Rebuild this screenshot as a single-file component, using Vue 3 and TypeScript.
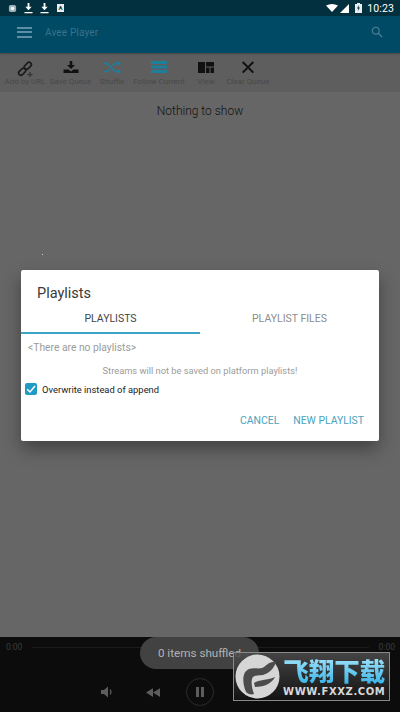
<template>
  <div class="screen">
    <header class="status-bar">
      <div class="status-left">
        <svg class="st-icon" viewBox="0 0 10 10" width="9" height="9"><rect x="1" y="1" width="8" height="8" rx="2" fill="#9fb2ba" /><circle cx="5" cy="5" r="2" fill="#eef3f5" /></svg>
        <svg class="st-icon" viewBox="0 0 10 12" width="9" height="11"><path d="M4 0h2v4h2.500L5 8 1.500 4H4zM.5 10h9v1.200h-9z" fill="#fff" /></svg>
        <svg class="st-icon" viewBox="0 0 10 12" width="9" height="11"><path d="M4 0h2v4h2.500L5 8 1.500 4H4zM.5 10h9v1.200h-9z" fill="#fff" /></svg>
        <span class="a-badge">A</span>
      </div>
      <div class="status-right">
        <svg viewBox="0 0 12 8" width="12" height="8"><path d="M0 1.600Q6-1.600 12 1.600L6 8z" fill="#fff" /></svg>
        <svg viewBox="0 0 9 9" width="9" height="9"><path d="M9 0v9H0z" fill="#fff" /></svg>
        <svg class="battery" viewBox="0 0 7 10" width="7" height="10"><path d="M2 0h3v1h2v9H0V1h2z" fill="#e8eef0" /><path d="M3.800 2 2 5.500h1.200L2.800 8 5 4.500H3.700z" fill="#0a3344" /></svg>
        <span class="clock">10:23</span>
      </div>
    </header>

    <div class="app-bar">
      <div class="burger"><i /><i /><i /></div>
      <span class="app-title">Avee Player</span>
      <svg class="search" viewBox="0 0 14 14" width="12" height="12"><circle cx="5.500" cy="5.500" r="4" fill="none" stroke="#4f8296" stroke-width="1.300" /><path d="M8.500 8.500 13 13" stroke="#4f8296" stroke-width="1.500" /></svg>
    </div>

    <div class="toolbar">
      <div v-for="tool in tools" :key="tool.label" class="tool" :style="{ width: tool.width + 'px' }">
        <svg viewBox="0 0 20 16" width="20" height="16" v-html="tool.icon" />
        <span>{{ tool.label }}</span>
      </div>
    </div>

    <main class="content">
      <p class="empty">Nothing to show</p>
      <span class="speck" />

      <section class="dialog">
        <h2>Playlists</h2>
        <div class="tabs">
          <div class="tab active">PLAYLISTS</div>
          <div class="tab">PLAYLIST FILES</div>
        </div>
        <p class="none">&lt;There are no playlists&gt;</p>
        <p class="note">Streams will not be saved on platform playlists!</p>
        <label class="check">
          <span class="box"><svg viewBox="0 0 12 12" width="12" height="12"><path d="M2.200 6.200 5 9l5-6" fill="none" stroke="#fff" stroke-width="1.500" /></svg></span>
          Overwrite instead of append
        </label>
        <div class="actions">
          <span>CANCEL</span>
          <span>NEW PLAYLIST</span>
        </div>
      </section>
    </main>

    <footer class="player">
      <div class="progress">
        <span>0:00</span>
        <i />
        <span>0:00</span>
      </div>
      <div class="controls">
        <svg viewBox="0 0 14 14" width="14" height="14"><path d="M1 5h3l4-3.500v11L4 9H1z" fill="#5d5d5d" /><path d="M10 4.500q2 2.500 0 5" fill="none" stroke="#5d5d5d" stroke-width="1.200" /></svg>
        <svg class="rewind" viewBox="0 0 16 10" width="14" height="9"><path d="M8 0v10L0 5zM16 0v10L8 5z" fill="#5d5d5d" /></svg>
        <div class="pause"><i /><i /></div>
      </div>
      <div class="toast">0 items shuffled</div>
      <div class="watermark">
        <div class="wm-logo">
          <svg viewBox="0 0 45 45" width="45" height="45">
            <circle cx="22.500" cy="22.500" r="22" fill="#d6d6d6" />
            <path d="M11 38C7 28 7 18 14 15c6-2 10 1 15-2 4-3 7-6 12-5-2 6-6 11-13 13-7 1-10 0-11 4-1 4 0 9 2 15-3 1-6 0-8-2z" fill="#4c4c4c" />
            <path d="M19 29c6-4 12-2 21-6-3 6-10 10-20 10z" fill="#4c4c4c" />
          </svg>
        </div>
        <div class="wm-text">
          <strong>飞翔下载</strong>
          <small>WWW.FXXZ.COM</small>
        </div>
      </div>
    </footer>
  </div>
</template>

<script setup lang="ts">
type Tool = { label: string; width: number; icon: string }

const tools: Tool[] = [
  {
    label: 'Add by URL',
    width: 44,
    icon: '<g fill="none" stroke="#1b1b1b" stroke-width="1.700"><rect x="3" y="8.500" width="8" height="4.500" rx="2.200" transform="rotate(-45 7 10.500)"/><rect x="9" y="2.500" width="8" height="4.500" rx="2.200" transform="rotate(-45 13 5)"/></g><path d="M14.500 11h1.200v2h1.800v1.200h-1.800V16h-1.200v-1.800h-2V13h2z" fill="#333"/>'
  },
  {
    label: 'Save Queue',
    width: 47,
    icon: '<path d="M8.700 0h2.600v4H14l-4 4-4-4h2.700zM2.500 8.500h5l2.500 2 2.500-2h5V12h-15z" fill="#111"/>'
  },
  {
    label: 'Shuffle',
    width: 36,
    icon: '<path d="M2 2.500h3.500l7.500 8h3M2 10.500h3.500l2-2.200M10.500 4.700 13 2.500h3" fill="none" stroke="#1d7f9b" stroke-width="1.700"/><path d="M15.500 0l3.500 2.500-3.500 2.500zM15.500 8l3.500 2.500-3.500 2.500z" fill="#1d7f9b"/>'
  },
  {
    label: 'Follow Current',
    width: 58,
    icon: '<path d="M2 0h16v3H2zM2 4.500h16v3H2zM2 9h16v3H2z" fill="#1d7f9b"/>'
  },
  {
    label: 'View',
    width: 36,
    icon: '<path d="M2 1h7v11H2zM10 1h8v4.500h-8zM10 6.500h3.500V12H10zM14.500 6.500H18V12h-3.500z" fill="#111"/>'
  },
  {
    label: 'Clear Queue',
    width: 48,
    icon: '<path d="M4.700 1l10.600 10.600M15.300 1 4.700 11.600" stroke="#111" stroke-width="2" fill="none"/>'
  }
]
</script>

<style>
html, body { margin: 0; background: #666; }
</style>

<style scoped>
.screen {
  width: 400px;
  height: 712px;
  display: flex;
  flex-direction: column;
  overflow: hidden;
  font-family: Roboto, "Noto Sans", sans-serif;
  position: relative;
}
.status-bar {
  height: 16px;
  background: #03303f;
  display: flex;
  align-items: center;
  justify-content: space-between;
  padding: 0 6px 0 8px;
}
.status-left, .status-right { display: flex; align-items: center; }
.status-left { gap: 7px; }
.status-right { gap: 2px; }
.st-icon { display: block; }
.battery { margin-left: 4px; }
.a-badge {
  width: 7px;
  height: 8px;
  background: #e8eef0;
  color: #0a3344;
  font-size: 6px;
  font-weight: 700;
  line-height: 8px;
  text-align: center;
  margin-left: 1px;
}
.clock { color: #fff; font-size: 10.500px; margin-left: 3px; letter-spacing: .1px; }
.app-bar {
  height: 37px;
  background: #004a66;
  display: flex;
  align-items: center;
  padding: 0 17px 5px;
  box-sizing: border-box;
  box-shadow: 0 1px 2px rgba(0, 0, 0, .25);
  z-index: 1;
}
.burger { width: 15px; display: flex; flex-direction: column; gap: 2.500px; margin-right: 13px; }
.burger i { display: block; height: 2px; background: #5c8fa5; }
.app-title { color: #3a7189; font-size: 10px; letter-spacing: .15px; }
.search { margin-left: auto; }
.toolbar {
  height: 39px;
  background: #5e5e5e;
  display: flex;
  padding-left: 3px;
  box-sizing: border-box;
  flex-shrink: 0;
}
.tool {
  display: flex;
  flex-direction: column;
  align-items: center;
  padding-top: 8px;
  box-sizing: border-box;
  flex-shrink: 0;
}
.tool svg { display: block; }
.tool span { font-size: 8px; line-height: 10px; color: #494949; white-space: nowrap; margin-top: 0; }
.content {
  flex: 1;
  background: #666;
  position: relative;
}
.empty {
  margin: 12px 0 0;
  text-align: center;
  font-size: 12px;
  font-weight: 300;
  color: #111;
}
.speck {
  position: absolute;
  left: 42px;
  top: 162px;
  width: 1px;
  height: 1px;
  background: #ccc;
}
.dialog {
  position: absolute;
  left: 21px;
  top: 178px;
  width: 358px;
  height: 171px;
  background: #fff;
  border-radius: 2px;
  box-shadow: 0 8px 18px rgba(0, 0, 0, .35);
  box-sizing: border-box;
}
.dialog h2 {
  margin: 0;
  padding: 15px 0 0 16px;
  font-size: 14.500px;
  line-height: 17px;
  font-weight: 400;
  color: #3a3a3a;
}
.tabs { display: flex; margin-top: 8px; height: 32px; }
.tab {
  width: 179px;
  text-align: center;
  font-size: 10.500px;
  line-height: 18px;
  color: #8d8d8d;
  box-sizing: border-box;
}
.tab.active { color: #444; border-bottom: 2px solid #3aa5c4; height: 24px; }
.none {
  margin: 0 0 0 7px;
  font-size: 10.300px;
  line-height: 12px;
  color: #9b9b9b;
}
.note {
  margin: 11px 0 0;
  text-align: center;
  font-size: 9.300px;
  line-height: 11px;
  color: #9b9b9b;
}
.check {
  display: flex;
  align-items: center;
  gap: 5px;
  margin: 7px 0 0 4px;
  font-size: 9.400px;
  color: #222;
  font-weight: 400;
}
.box {
  width: 12px;
  height: 12px;
  border-radius: 2px;
  background: #1f9bc4;
  display: block;
}
.box svg { display: block; }
.actions {
  display: flex;
  justify-content: flex-end;
  gap: 14px;
  margin-top: 20px;
  padding-right: 15px;
  font-size: 10.400px;
  line-height: 12px;
  color: #4aa3bd;
}
.player {
  height: 75px;
  background: #0c0c0c;
  position: relative;
  flex-shrink: 0;
}
.progress {
  display: flex;
  align-items: center;
  gap: 10px;
  padding: 5px 5px 0 6px;
  font-size: 8.500px;
  color: #3d3d3d;
}
.progress i { flex: 1; height: 1px; background: #1c1c1c; }
.controls {
  display: flex;
  align-items: center;
  gap: 26px;
  margin-left: 100px;
  margin-top: 26px;
}
.rewind { margin-left: 6px; }
.pause {
  width: 26px;
  height: 26px;
  border: 1px solid #2b2b2b;
  border-radius: 50%;
  display: flex;
  align-items: center;
  justify-content: center;
  gap: 2px;
}
.pause i { width: 3px; height: 10px; background: #5d5d5d; }
.toast {
  position: absolute;
  left: 140px;
  top: 0;
  width: 119px;
  height: 32px;
  border-radius: 16px;
  background: #424242;
  color: #b2b2b2;
  font-size: 11.700px;
  line-height: 33px;
  text-align: center;
  white-space: nowrap;
}
.watermark {
  position: absolute;
  left: 233px;
  top: 15px;
  width: 157px;
  height: 49px;
  box-sizing: border-box;
  border: 1px solid #8a8a8a;
  background: linear-gradient(rgba(78, 78, 78, .85), rgba(20, 20, 20, .85));
  display: flex;
  align-items: center;
  padding-left: 1px;
  gap: 3px;
}
.wm-logo { display: block; height: 45px; }
.wm-text { display: flex; flex-direction: column; align-items: center; }
.wm-text strong {
  font-family: "Noto Sans CJK SC", sans-serif;
  font-size: 25.500px;
  line-height: 29px;
  font-weight: 900;
  background: linear-gradient(#a9e6fb, #39b4e8);
  -webkit-background-clip: text;
  background-clip: text;
  color: transparent;
}
.wm-text small {
  font-family: "DejaVu Sans", sans-serif;
  font-size: 10px;
  line-height: 12px;
  margin-top: 2px;
  font-weight: 700;
  color: #d8d8d8;
  letter-spacing: .6px;
}
</style>
